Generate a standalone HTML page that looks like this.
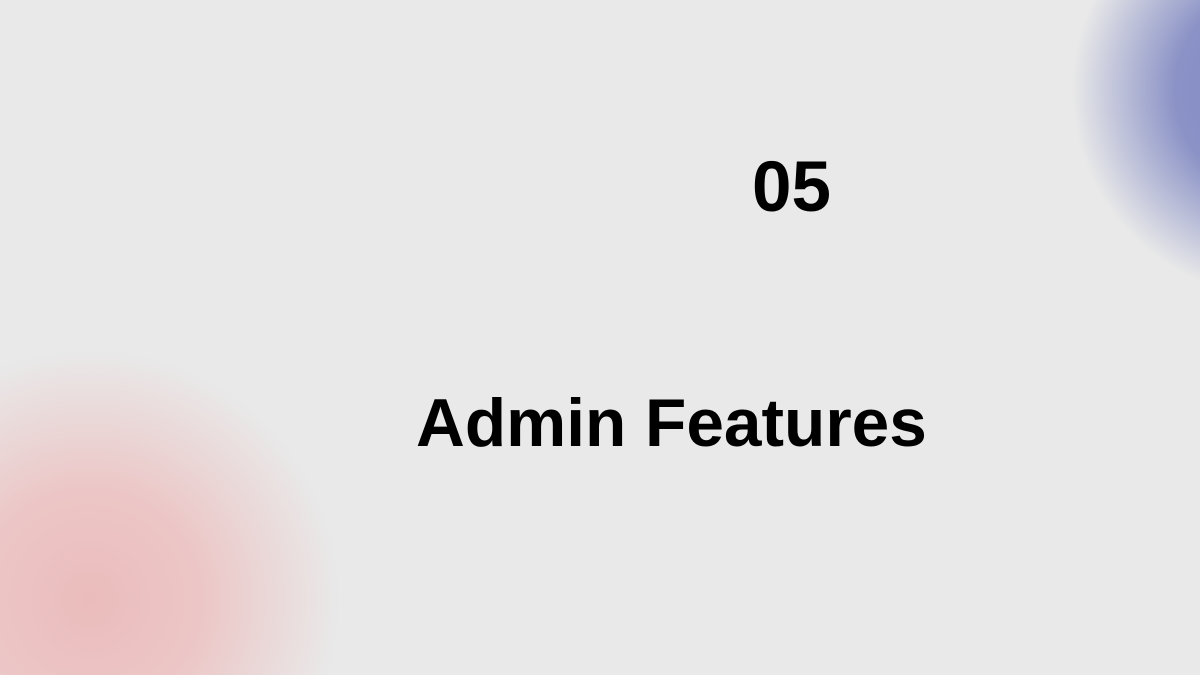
<!DOCTYPE html>
<html><head><style>
html,body{margin:0;padding:0;width:1200px;height:675px;overflow:hidden}
body{position:relative;font-family:"Liberation Sans",sans-serif;background:
radial-gradient(circle 297px at 1280px 90px,#7f88c4 0%,#8a92c6 35%,rgba(233,233,233,0) 70%),
radial-gradient(circle 368px at 90px 600px,#ebbcbc 0%,#ecc6c6 30%,rgba(233,233,233,0) 68%),
#e9e9e9}
.t{position:absolute;font-weight:bold;color:#000;white-space:nowrap}
</style></head><body>
<div class="t" style="left:752px;top:148px;font-size:71px;line-height:80px">05</div>
<div class="t" style="left:416px;top:384px;font-size:67.6px;line-height:80px">Admin Features</div>
</body></html>
